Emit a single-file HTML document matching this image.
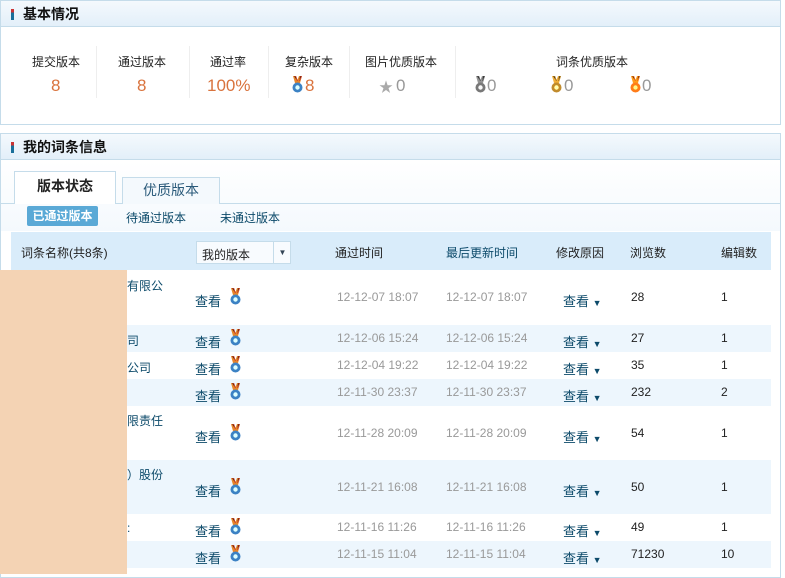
<!DOCTYPE html><html><head><meta charset="utf-8"><style>
*{margin:0;padding:0;box-sizing:border-box}
body{width:785px;height:574px;background:#fff;font-family:"Liberation Sans","Noto Sans CJK SC",sans-serif;font-size:12px;color:#222;position:relative;overflow:hidden}
.a{position:absolute;white-space:nowrap}
.box{position:absolute;border:1px solid #c5dcea;background:#fff}
.hd{position:absolute;left:0;right:0;top:0;height:26px;background:linear-gradient(#f4f9fd,#e3eff9);border-bottom:1px solid #c5dcea}
.hd b{position:absolute;left:22px;top:3px;font-size:14px;color:#111}
.hd i{position:absolute;left:10px;top:8px;width:3px;height:11px;background:linear-gradient(#c33 0,#c33 30%,#1a6f9a 30%)}
.num{font-size:17px;color:#d9733d}
.g{color:#999;font-size:17px}
.sep{position:absolute;top:46px;width:1px;height:52px;background:#eee}
.lk{color:#0c4a6a}
.gr{color:#999}
.row{position:absolute;left:8px;width:763px;background:#edf6fd}
</style></head><body>
<svg width="0" height="0" style="position:absolute"><defs>
<g id="m"><path d="M3 0h3l1.5 4 1.5-4h3l-2 7h-5z" fill="#e8862a"/><path d="M4 0h1.5l2 5 M10 0h1.5l-2 5" stroke="#c8432a" stroke-width="1"/><circle cx="7.5" cy="11.5" r="5" fill="#3c82c4"/><circle cx="7.5" cy="11.5" r="2.2" fill="#dff"/></g>
</defs></svg>
<div class="box" style="left:0;top:0;width:781px;height:125px">
<div class="hd"><i></i><b>基本情况</b></div></div>
<div class="a" style="left:32px;top:53px">提交版本</div><div class="a num" style="left:51px;top:76px">8</div>
<div class="sep" style="left:96px"></div>
<div class="a" style="left:118px;top:53px">通过版本</div><div class="a num" style="left:137px;top:76px">8</div>
<div class="sep" style="left:189px"></div>
<div class="a" style="left:210px;top:53px">通过率</div><div class="a num" style="left:207px;top:76px">100%</div>
<div class="sep" style="left:268px"></div>
<div class="a" style="left:285px;top:53px">复杂版本</div><svg class="a" style="left:290px;top:76px" width="15" height="18"><use href="#m"/></svg><div class="a num" style="left:305px;top:76px">8</div>
<div class="sep" style="left:349px"></div>
<div class="a" style="left:365px;top:53px">图片优质版本</div><div class="a" style="left:379px;top:77px;color:#aaa;font-size:14px">★</div><div class="a g" style="left:396px;top:76px">0</div>
<div class="sep" style="left:455px"></div>
<div class="a" style="left:556px;top:53px">词条优质版本</div>
<svg class="a" style="left:473px;top:76px;filter:grayscale(1)" width="15" height="18"><use href="#m"/></svg><div class="a g" style="left:487px;top:76px">0</div>
<svg class="a" style="left:549px;top:76px;filter:sepia(1) saturate(3)" width="15" height="18"><use href="#m"/></svg><div class="a g" style="left:564px;top:76px">0</div>
<svg class="a" style="left:628px;top:76px;filter:sepia(1) saturate(5) hue-rotate(-15deg)" width="15" height="18"><use href="#m"/></svg><div class="a g" style="left:642px;top:76px">0</div>

<div class="box" style="left:0;top:133px;width:781px;height:445px">
<div class="hd"><i></i><b>我的词条信息</b></div>
<div style="position:absolute;left:0;right:0;top:27px;height:70px;background:linear-gradient(#fff,#f4f9fd)"></div>
</div>
<div class="a" style="left:0;top:203px;width:781px;height:1px;background:#c5dcea"></div>
<div class="a" style="left:14px;top:171px;width:102px;height:33px;background:#fff;border:1px solid #c5dcea;border-bottom:none;font-size:14px;font-weight:bold;text-align:center;line-height:28px">版本状态</div>
<div class="a" style="left:122px;top:177px;width:98px;height:27px;background:#f4f9fd;border:1px solid #c5dcea;border-bottom:none;font-size:14px;color:#2a5a7a;text-align:center;line-height:24px">优质版本</div>
<div class="a" style="left:27px;top:206px;width:71px;height:20px;background:#5aa9d6;border-radius:2px;color:#fff;font-weight:bold;text-align:center;line-height:20px">已通过版本</div>
<div class="a lk" style="left:126px;top:209px">待通过版本</div>
<div class="a lk" style="left:220px;top:209px">未通过版本</div>
<div class="a" style="left:11px;top:232px;width:760px;height:38px;background:#d9ecfa"></div>
<div class="a" style="left:21px;top:244px">词条名称(共8条)</div>
<div class="a" style="left:196px;top:241px;width:95px;height:23px;background:#f8fbfe;border:1px solid #c5dcea;padding:4px 0 0 5px">我的版本<span style="position:absolute;left:76px;top:0;width:18px;height:21px;border-left:1px solid #c5dcea;font-size:8px;color:#345;text-align:center;line-height:21px">▼</span></div>
<div class="a" style="left:335px;top:244px">通过时间</div>
<div class="a lk" style="left:446px;top:244px">最后更新时间</div>
<div class="a" style="left:556px;top:244px">修改原因</div>
<div class="a" style="left:630px;top:244px">浏览数</div>
<div class="a" style="left:721px;top:244px">编辑数</div>

<div class="row" style="top:325px;height:27px"></div>
<div class="row" style="top:379px;height:27px"></div>
<div class="row" style="top:460px;height:54px"></div>
<div class="row" style="top:541px;height:27px"></div>

<div class="a lk" style="left:127px;top:277px">有限公</div>
<div class="a lk" style="left:127px;top:332px">司</div>
<div class="a lk" style="left:127px;top:359px">公司</div>
<div class="a lk" style="left:127px;top:412px">限责任</div>
<div class="a lk" style="left:127px;top:466px">）股份</div>
<div class="a lk" style="left:127px;top:521px">:</div>

<div class="a" style="left:0;top:270px;width:127px;height:304px;background:#f4d3b4"></div>

<div id="rows"></div>
<script>
var d=[[298,"12-12-07 18:07","28","1"],[339,"12-12-06 15:24","27","1"],[366,"12-12-04 19:22","35","1"],[393,"12-11-30 23:37","232","2"],[434,"12-11-28 20:09","54","1"],[488,"12-11-21 16:08","50","1"],[528,"12-11-16 11:26","49","1"],[555,"12-11-15 11:04","71230","10"]];
var h="";d.forEach(function(r){var t=r[0]-8;
h+='<div class="a lk" style="left:195px;top:'+(t+1)+'px;font-size:13px">查看</div><svg class="a" style="left:228px;top:'+(t-2)+'px" width="15" height="18"><use href="#m"/></svg>';
h+='<div class="a gr" style="left:337px;top:'+t+'px">'+r[1]+'</div><div class="a gr" style="left:446px;top:'+t+'px">'+r[1]+'</div>';
h+='<div class="a lk" style="left:563px;top:'+(t+1)+'px;font-size:13px">查看 <span style="font-size:9px">▼</span></div>';
h+='<div class="a" style="left:631px;top:'+t+'px">'+r[2]+'</div><div class="a" style="left:721px;top:'+t+'px">'+r[3]+'</div>';});
document.getElementById("rows").innerHTML=h;
</script>
</body></html>
